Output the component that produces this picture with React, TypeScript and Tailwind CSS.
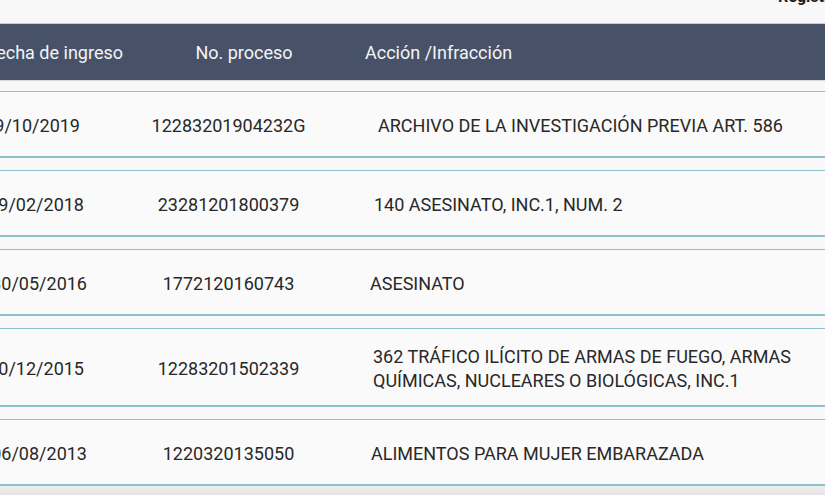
import React from "react";

type Row = {
  date: string;
  proc: string;
  action: React.ReactNode;
  dateEnd: number;
  actionPad: number;
  tall?: boolean;
};

const rows: Row[] = [
  { date: "29/10/2019", proc: "12283201904232G", action: "ARCHIVO DE LA INVESTIGACIÓN PREVIA ART. 586", dateEnd: 80, actionPad: 1 },
  { date: "19/02/2018", proc: "23281201800379", action: "140 ASESINATO, INC.1, NUM. 2", dateEnd: 84, actionPad: 1 },
  { date: "30/05/2016", proc: "1772120160743", action: "ASESINATO", dateEnd: 87, actionPad: 0 },
  {
    date: "10/12/2015",
    proc: "12283201502339",
    action: (
      <>
        <span className="block">362 TRÁFICO ILÍCITO DE ARMAS DE FUEGO, ARMAS</span>
        <span className="block">QUÍMICAS, NUCLEARES O BIOLÓGICAS, INC.1</span>
      </>
    ),
    dateEnd: 84,
    actionPad: 0,
    tall: true,
  },
  { date: "06/08/2013", proc: "1220320135050", action: "ALIMENTOS PARA MUJER EMBARAZADA", dateEnd: 87, actionPad: 1 },
];

const CENTER = 457; // twice the process column centre (228.5)

export default function App() {
  return (
    <div
      className="w-[825px] h-[495px] overflow-hidden bg-[#f8f8f8] text-[#282828]"
      style={{ fontFamily: "Roboto, 'Liberation Sans', sans-serif" }}
    >
      <div className="h-[23px] overflow-hidden">
        <div className="pl-[778px] mt-[-11px] whitespace-nowrap text-[16px] leading-[16px] font-bold text-[#1e1e1e]">
          Registros
        </div>
      </div>

      <div className="h-[58px] bg-[#475269] border-t border-[#c9ced6] border-b border-b-[#d6d9de] flex items-center text-[18px] text-[#f3f4f6] whitespace-nowrap">
        <div className="w-[123px] shrink-0 flex justify-end">
          <span className="shrink-0">Fecha de ingreso</span>
        </div>
        <div className="w-[242px] shrink-0 text-center">No. proceso</div>
        <div>Acción /Infracción</div>
      </div>

      <div className="flex flex-col gap-[12px] pt-[10px]">
        {rows.map((r, i) => (
          <div
            key={i}
            className={
              "flex items-center bg-[#fafafa] border-t border-[#8cc2cc] border-b-2 border-b-[#8cc2cc] text-[18px] leading-[24px] whitespace-nowrap pt-[3px] " +
              (r.tall ? "h-[79px]" : "h-[67px]")
            }
          >
            <div className="shrink-0 flex justify-end" style={{ width: r.dateEnd }}>
              <span className="shrink-0">{r.date}</span>
            </div>
            <div className="shrink-0 text-center" style={{ width: CENTER - 2 * r.dateEnd }}>
              {r.proc}
            </div>
            <div style={{ paddingLeft: r.actionPad }}>{r.action}</div>
          </div>
        ))}
      </div>
      <div className="h-[12px] bg-gradient-to-b from-[#eeeeee] to-[#e2e2e2]" />
    </div>
  );
}
